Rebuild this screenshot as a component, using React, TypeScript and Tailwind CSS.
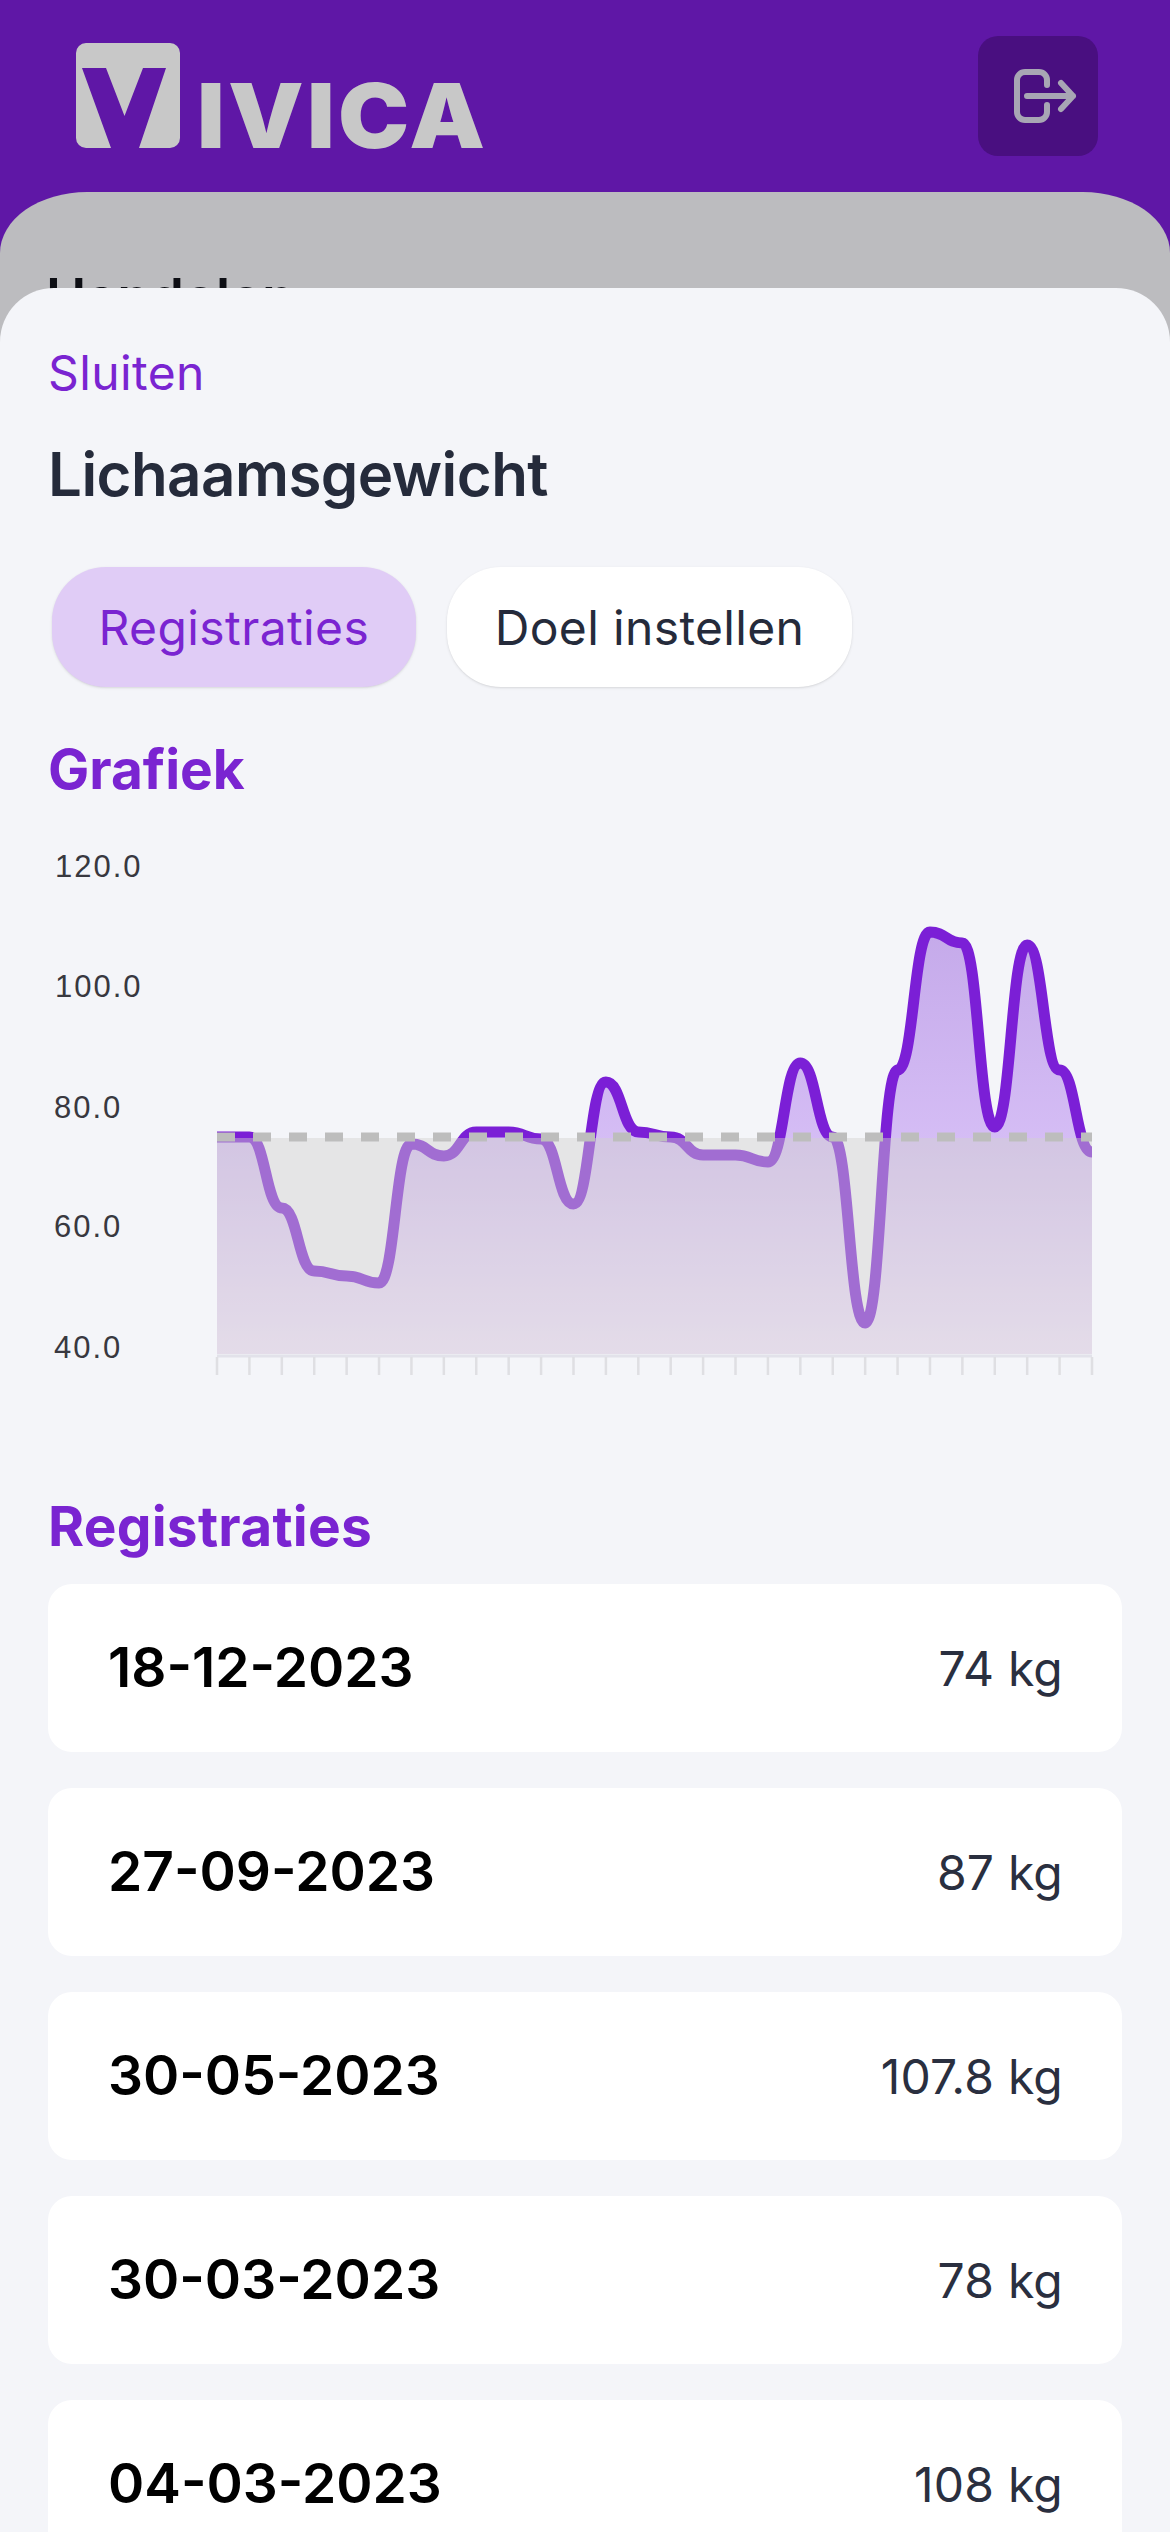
const registrations = [
  { date: '18-12-2023', value: '74 kg' },
  { date: '27-09-2023', value: '87 kg' },
  { date: '30-05-2023', value: '107.8 kg' },
  { date: '30-03-2023', value: '78 kg' },
  { date: '04-03-2023', value: '108 kg' },
];

const yLabels = [
  { text: '120.0', y: 866 },
  { text: '100.0', y: 986 },
  { text: '80.0', y: 1107 },
  { text: '60.0', y: 1226 },
  { text: '40.0', y: 1347 },
];

// y position of every data point, in page pixels
const pointsY = [
  1137, 1137, 1208, 1271, 1276, 1283, 1144, 1156, 1132, 1132, 1139, 1204, 1082, 1132,
  1137, 1155, 1155, 1162, 1063, 1137, 1323, 1070, 932, 943, 1127, 945, 1070, 1152,
];

const LEFT = 217;
const RIGHT = 1092;
const GOAL = 1137;
const BOTTOM = 1354;
const STEP = (RIGHT - LEFT) / (pointsY.length - 1);

function buildLine() {
  let d = `M${LEFT} ${pointsY[0]}`;
  for (let i = 1; i < pointsY.length; i++) {
    const x0 = LEFT + STEP * (i - 1);
    const x1 = LEFT + STEP * i;
    const mid = (x0 + x1) / 2;
    d += ` C${mid} ${pointsY[i - 1]} ${mid} ${pointsY[i]} ${x1} ${pointsY[i]}`;
  }
  return d;
}

function WeightChart() {
  const line = buildLine();
  return (
    <svg viewBox="48 830 1074 560" className="mt-[29px] block h-[560px] w-[1074px]">
      <defs>
        <linearGradient id="weightFill" gradientUnits="userSpaceOnUse" x1="0" y1="932" x2="0" y2="1354">
          <stop offset="0" stopColor="#c5aaea" />
          <stop offset="0.5" stopColor="#d5bdf5" />
          <stop offset="1" stopColor="#f2e4ff" />
        </linearGradient>
      </defs>
      {yLabels.map((label) => (
        <text
          key={label.text}
          x={label.text.length > 4 ? 55 : 54}
          y={label.y + 11}
          fontSize="31"
          letterSpacing="2"
          fill="#38383f"
          fontFamily='"Liberation Sans", sans-serif'
        >
          {label.text}
        </text>
      ))}
      <path d={`${line} L${RIGHT} ${BOTTOM} L${LEFT} ${BOTTOM} Z`} fill="url(#weightFill)" />
      <path d={line} fill="none" stroke="#7b1fd6" strokeWidth="11" />
      <rect x={LEFT} y={GOAL + 1} width={RIGHT - LEFT} height={BOTTOM - GOAL - 1} fill="#d2d2ce" fillOpacity="0.44" />
      <line x1={LEFT} y1={GOAL} x2={RIGHT} y2={GOAL} stroke="#bdbdbd" strokeWidth="9" strokeDasharray="18 18" />
      <line x1={LEFT} y1="1356" x2={RIGHT} y2="1356" stroke="#e2e2ea" strokeWidth="3" />
      {pointsY.map((_, i) => (
        <line
          key={i}
          x1={LEFT + STEP * i}
          y1="1357"
          x2={LEFT + STEP * i}
          y2="1375"
          stroke="#dfdfe3"
          strokeWidth="2.5"
        />
      ))}
    </svg>
  );
}

function Logo() {
  return (
    <div className="flex items-end gap-[17px] text-[#c8c8c8]">
      <svg viewBox="0 0 104 105" className="block h-[105px] w-[104px]">
        <path
          fill="currentColor"
          d="M10 0H94A10 10 0 0 1 104 10V95A10 10 0 0 1 94 105H63L90 25H67L48.500 73L30 25H6L35 105H10A10 10 0 0 1 0 95V10A10 10 0 0 1 10 0Z"
        />
      </svg>
      <span className="origin-left scale-x-[1.06] text-[90px] leading-[65px] font-black tracking-[3px]">IVICA</span>
    </div>
  );
}

function ExitButton() {
  return (
    <button className="mt-9 flex size-[120px] items-center justify-center rounded-[20px] bg-[#490f80]">
      <svg viewBox="0 0 120 120" className="size-[120px]" fill="none" stroke="#a8a6b4" strokeWidth="6" strokeLinecap="round" strokeLinejoin="round">
        <path d="M69 49V44a8 8 0 0 0-8-8H47a8 8 0 0 0-8 8V76a8 8 0 0 0 8 8H61a8 8 0 0 0 8-8V69" />
        <path d="M49 60H95M83 47L95 60L83 73" />
      </svg>
    </button>
  );
}

export default function App() {
  return (
    <div className="relative flex h-[2532px] w-[1170px] flex-col overflow-hidden bg-[#5f17a6] font-['Inter',sans-serif]">
      <header className="flex h-[192px] shrink-0 items-start justify-between pr-[72px] pl-[76px]">
        <div className="pt-[43px]">
          <Logo />
        </div>
        <ExitButton />
      </header>

      <main className="flex-1 rounded-t-[87px_61px] bg-[#bcbcbf] px-[46px] pt-[70px]">
        <h2 className="text-[54px] leading-[72px] font-semibold text-[#0d0e14]">Handelen</h2>
      </main>

      <section className="absolute inset-x-0 top-[288px] bottom-0 overflow-hidden rounded-t-[54px] bg-[#f4f5f9] px-12 pt-[55px]">
        <p className="text-[48px] leading-[60px] tracking-[0.4px] text-[#7a24d1]">Sluiten</p>
        <h1 className="mt-[35px] text-[60px] leading-[72px] font-semibold tracking-[-0.55px] text-[#252b3b]">Lichaamsgewicht</h1>

        <div className="mt-[57px] ml-1 flex gap-[31px]">
          <button className="h-[120px] rounded-[54px] bg-[#e0ccf6] px-[46.500px] pt-[2px] text-[48px] tracking-[0.4px] text-[#7a24d1] shadow-sm">
            Registraties
          </button>
          <button className="h-[120px] rounded-[54px] bg-white px-12 pt-[2px] text-[48px] tracking-[0.35px] text-[#252b3b] shadow-sm">
            Doel instellen
          </button>
        </div>

        <h3 className="mt-[50px] text-[55px] leading-[64px] font-bold text-[#7a24d1]">Grafiek</h3>
        <WeightChart />

        <h3 className="mt-[104px] text-[55px] leading-[64px] font-bold tracking-[0.25px] text-[#7a24d1]">Registraties</h3>
        <div className="mt-[26px] flex flex-col gap-9">
          {registrations.map((item) => (
            <div key={item.date} className="flex h-[168px] shrink-0 items-center justify-between rounded-3xl bg-white pr-[59px] pl-[60px]">
              <span className="mb-[1px] text-[55px] font-semibold text-black">{item.date}</span>
              <span className="mt-[2px] text-[48px] tracking-[0.2px] text-[#2a2f3f]">{item.value}</span>
            </div>
          ))}
        </div>
      </section>
    </div>
  );
}
